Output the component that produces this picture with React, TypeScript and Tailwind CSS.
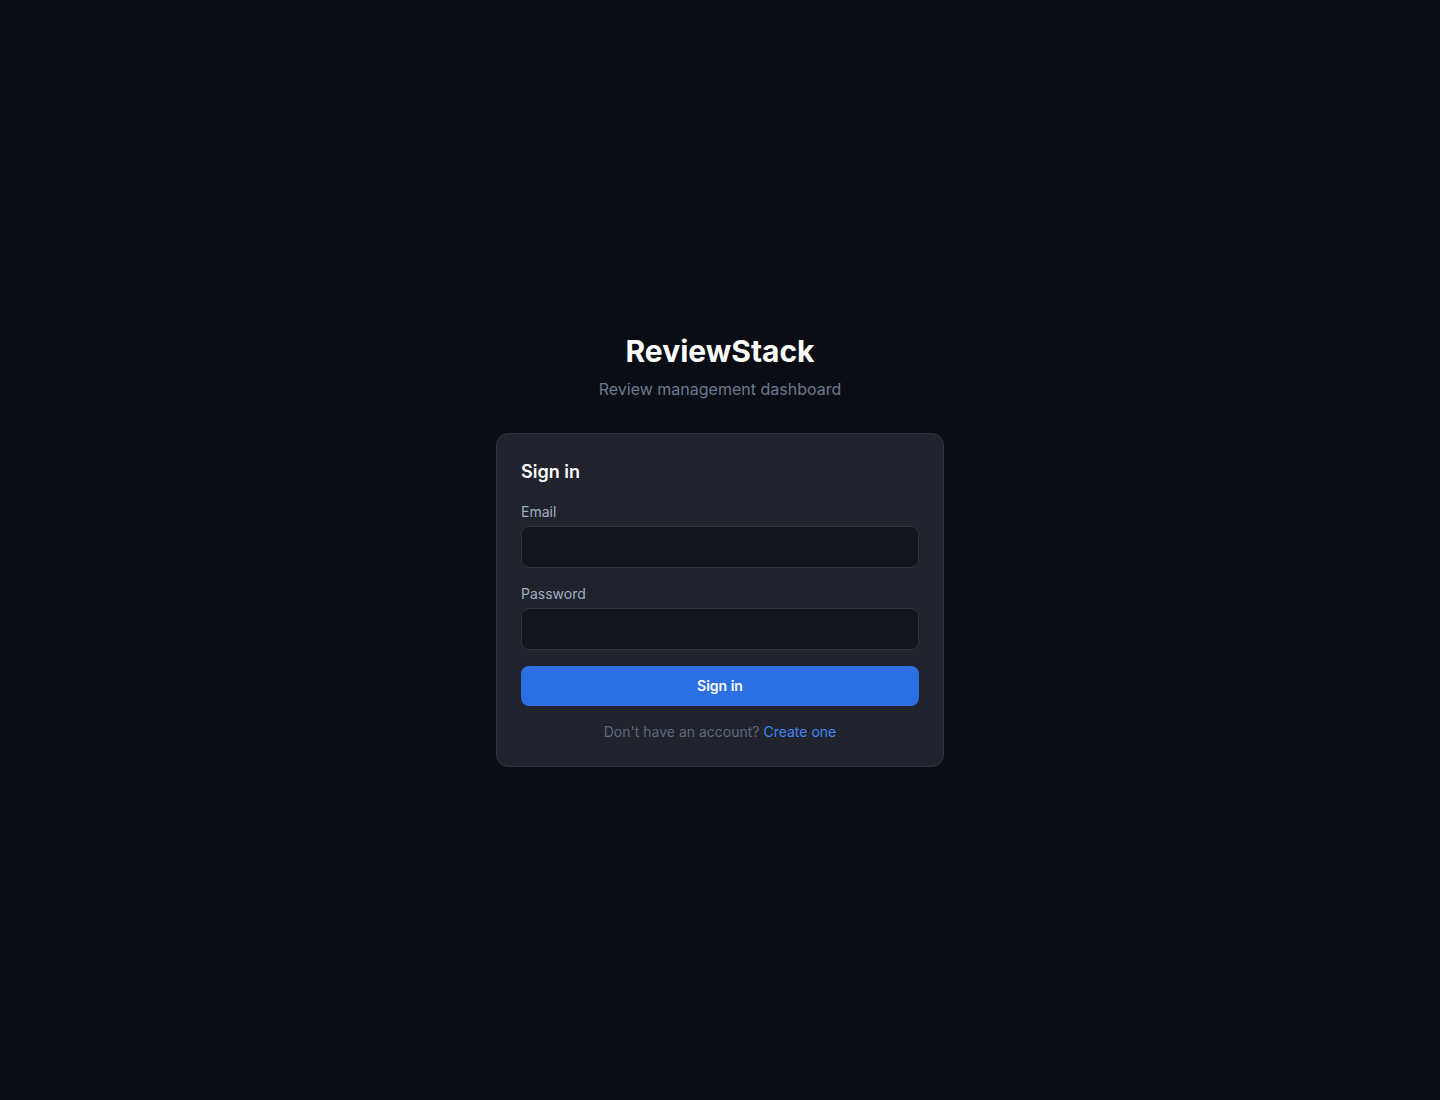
import { useState } from 'react';

const App: React.FC = () => {
  const [email, setEmail] = useState('');
  const [password, setPassword] = useState('');

  return (
    <div
      className="min-h-screen bg-[#0a0d13] flex items-center justify-center px-4"
      style={{ fontFamily: 'Inter, "Noto Sans", sans-serif' }}
    >
      <div className="w-full max-w-md">
        <div className="text-center mb-8">
          <h1 className="text-3xl font-bold text-white">ReviewStack</h1>
          <p className="mt-2 text-base text-[#6b7a90]">Review management dashboard</p>
        </div>

        <div className="bg-[#20232b] border border-[#30343e] rounded-xl p-6">
          <h2 className="text-lg font-semibold text-white mb-4">Sign in</h2>
          <form className="space-y-4" onSubmit={(e) => e.preventDefault()}>
            <div>
              <label className="block text-sm text-[#9fb0c6] mb-1">Email</label>
              <input
                type="email"
                className="w-full bg-[#14161b] border border-[#30343e] rounded-lg px-3 py-2.5 text-sm text-white outline-none"
                value={email}
                onChange={(e) => setEmail(e.target.value)}
              />
            </div>
            <div>
              <label className="block text-sm text-[#9fb0c6] mb-1">Password</label>
              <input
                type="password"
                className="w-full bg-[#14161b] border border-[#30343e] rounded-lg px-3 py-2.5 text-sm text-white outline-none"
                value={password}
                onChange={(e) => setPassword(e.target.value)}
              />
            </div>
            <button
              type="submit"
              className="w-full bg-[#2b6fe2] text-white text-sm font-semibold rounded-lg py-2.5"
            >
              Sign in
            </button>
          </form>
          <p className="mt-4 text-center text-sm text-[#5d6a7e]">
            Don't have an account? <a className="text-[#3f86f5]" href="#">Create one</a>
          </p>
        </div>
      </div>
    </div>
  );
};

export default App;
